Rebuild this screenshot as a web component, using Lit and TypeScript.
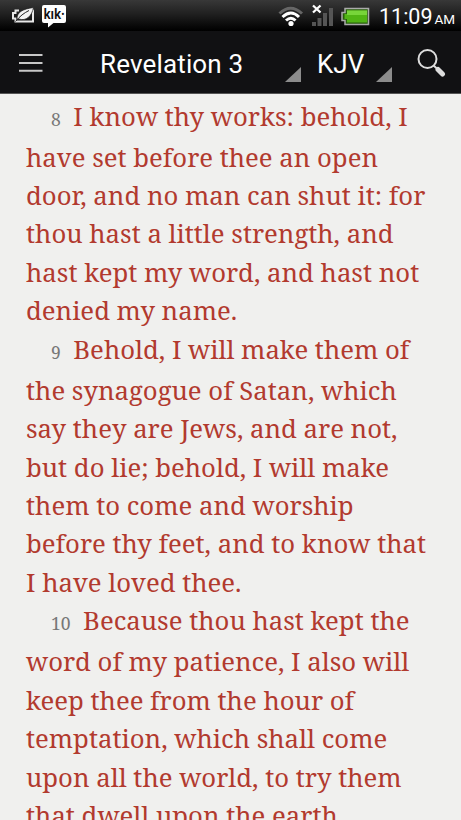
import { LitElement, html, css } from "lit";
import { customElement } from "lit/decorators.js";

interface Verse {
  number: number;
  lines: string[];
}

const verses: Verse[] = [
  {
    number: 8,
    lines: [
      "I know thy works: behold, I",
      "have set before thee an open",
      "door, and no man can shut it: for",
      "thou hast a little strength, and",
      "hast kept my word, and hast not",
      "denied my name.",
    ],
  },
  {
    number: 9,
    lines: [
      "Behold, I will make them of",
      "the synagogue of Satan, which",
      "say they are Jews, and are not,",
      "but do lie; behold, I will make",
      "them to come and worship",
      "before thy feet, and to know that",
      "I have loved thee.",
    ],
  },
  {
    number: 10,
    lines: [
      "Because thou hast kept the",
      "word of my patience, I also will",
      "keep thee from the hour of",
      "temptation, which shall come",
      "upon all the world, to try them",
      "that dwell upon the earth.",
    ],
  },
];

@customElement("status-bar")
class StatusBar extends LitElement {
  static styles = css`
    :host {
      display: flex;
      align-items: flex-start;
      height: 31px;
      background: linear-gradient(#383838, #202020 45%, #050505 90%, #000);
      color: #fff;
      font-family: Roboto, sans-serif;
    }
    svg {
      display: block;
      flex: none;
    }
    .time {
      margin-left: 1px;
      font-size: 21.5px;
      line-height: 33px;
      white-space: nowrap;
    }
    .ampm {
      font-size: 13.5px;
      margin-left: 2px;
    }
    .kik {
      font: 700 15px/1 "Open Sans", sans-serif;
    }
  `;

  render() {
    return html`
      <svg width="378" height="31" viewBox="0 0 378 31">
        <path d="M19 10.500H15.500V13H13V18.500H15.500V21.500H33V10.500H32" fill="none" stroke="#e8e8e8" stroke-width="2" />
        <path d="M17 19.500C16.500 12 23 9 33.500 7.500C32 16 26 21.500 19 19Z" fill="#f2f2f2" stroke="#1a1a1a" stroke-width="0.700" />
        <path d="M15.500 21.500C20 16 24 13 29 10.500" fill="none" stroke="#222" stroke-width="1" />
        <path d="M44 5H64Q66 5 66 7V21Q66 23 64 23H53.500L48 27.500V23H44Q42 23 42 21V7Q42 5 44 5Z" fill="#fff" />
        <text class="kik" x="43.500" y="18.500" textLength="21" lengthAdjust="spacingAndGlyphs" fill="#111">kık·</text>
        <g fill="none" stroke-width="3">
          <path d="M279.500 13.500Q290.500 3 302 13.500" stroke="#666" />
          <path d="M282.500 17Q291 9 299 17" stroke="#fff" />
          <path d="M286 20.500Q291 16 295.500 20.500" stroke="#fff" />
        </g>
        <circle cx="291" cy="23.500" r="2.600" fill="#fff" />
        <path d="M313 5.500L320.500 12.500M320.500 5.500L313 12.500" stroke="#fff" stroke-width="2.300" />
        <path d="M312 22H316V26H312ZM317.500 18H321.500V26H317.500ZM323 13H327V26H323ZM329 8H333V26H329Z" fill="#555" />
        <path d="M345 8.500H368.500V24.500H345V20.500H342V12.500H345Z" fill="#285c0c" stroke="#aaa" stroke-width="1.500" />
        <path d="M347 10.500H367V22.500H347V19H344.500V14H347Z" fill="#51b514" />
        <path d="M347 10.500H367V15H347Z" fill="#78d53a" />
      </svg>
      <div class="time">11:09<span class="ampm">AM</span></div>
    `;
  }
}

@customElement("title-bar")
class TitleBar extends LitElement {
  static styles = css`
    :host {
      display: flex;
      height: 63px;
      box-sizing: border-box;
      padding: 0 14px 0 19px;
      background: #111113;
      border-bottom: 1px solid #555;
      color: #fff;
      font: 26px/66px Roboto, sans-serif;
      white-space: nowrap;
    }
    svg {
      display: block;
      flex: none;
    }
    .book {
      width: 185px;
      margin-left: 57px;
      letter-spacing: 0.15px;
    }
    .version {
      width: 59px;
      margin-left: 16px;
    }
    .corner {
      width: 16px;
      height: 15px;
      margin-top: 36px;
      background: #8c8c8c;
      clip-path: polygon(100% 0, 100% 100%, 0 100%);
    }
    .search {
      margin-left: 24px;
    }
  `;

  render() {
    return html`
      <svg width="24" height="62" viewBox="0 0 24 62">
        <path d="M0 24H23.500M0 32H23.500M0 39.700H23.500" stroke="#c8c8c8" stroke-width="2" />
      </svg>
      <div class="book">Revelation 3</div>
      <div class="corner"></div>
      <div class="version">KJV</div>
      <div class="corner"></div>
      <svg class="search" width="30" height="62" viewBox="416 0 30 62">
        <circle cx="427.500" cy="28" r="9" fill="none" stroke="#ddd" stroke-width="2" />
        <path d="M433.500 34.500L438 38.500" stroke="#ddd" stroke-width="2" />
        <path d="M438 38.500L442.500 43" stroke="#ddd" stroke-width="5" stroke-linecap="round" />
      </svg>
    `;
  }
}

@customElement("app-root")
class AppRoot extends LitElement {
  static styles = css`
    :host {
      display: block;
      height: 820px;
      overflow: hidden;
      background: #f0f0ee;
    }
    .reader {
      height: 726px;
      overflow: hidden;
      box-sizing: border-box;
      padding: 3.600px 0 0 26px;
      color: #b23a2e;
      font: 25.720px/38.420px "Noto Serif", "Droid Serif", serif;
      white-space: nowrap;
    }
    .first {
      padding: 0 0 2.600px 25px;
    }
    .number {
      margin-right: 12.500px;
      color: #777;
      font-size: 17.500px;
      line-height: 1;
    }
  `;

  render() {
    return html`
      <status-bar></status-bar>
      <title-bar></title-bar>
      <div class="reader">
        ${verses.map(({ number, lines: [first, ...rest] }) => html`
          <div class="first"><span class="number">${number}</span>${first}</div>
          ${rest.map((line) => html`<div>${line}</div>`)}
        `)}
      </div>
    `;
  }
}
